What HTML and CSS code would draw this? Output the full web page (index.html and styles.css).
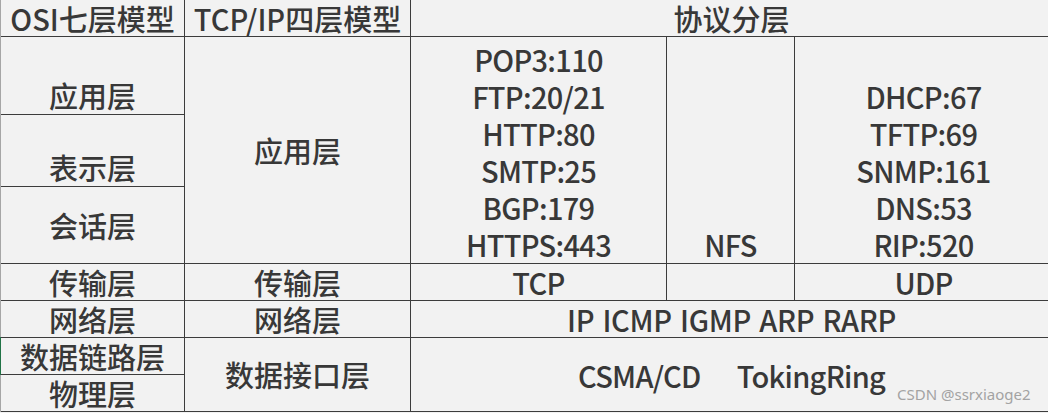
FILE: index.html
```html
<!DOCTYPE html>
<html lang="zh-CN">
<head>
<meta charset="utf-8">
<title>OSI / TCP-IP 分层</title>
<link rel="stylesheet" href="styles.css">
</head>
<body>
<div class="sheet">
  <div class="cell r1 c1 mid">OSI七层模型</div>
  <div class="cell r1 c2 mid">TCP/IP四层模型</div>
  <div class="cell r1 c35 mid">协议分层</div>

  <div class="cell r2 c1 bottom">应用层</div>
  <div class="cell r3 c1 bottom">表示层</div>
  <div class="cell r4 c1 mid">会话层</div>

  <div class="cell r24 c2 mid">应用层</div>
  <div class="cell r24 c3 bottom list latin">
    <span>POP3:110</span>
    <span>FTP:20/21</span>
    <span>HTTP:80</span>
    <span>SMTP:25</span>
    <span>BGP:179</span>
    <span>HTTPS:443</span>
  </div>
  <div class="cell r24 c4 bottom latin">NFS</div>
  <div class="cell r24 c5 bottom list latin">
    <span>DHCP:67</span>
    <span>TFTP:69</span>
    <span>SNMP:161</span>
    <span>DNS:53</span>
    <span>RIP:520</span>
  </div>

  <div class="cell r5 c1 mid">传输层</div>
  <div class="cell r5 c2 mid">传输层</div>
  <div class="cell r5 c3 mid latin">TCP</div>
  <div class="cell r5 c4 mid"></div>
  <div class="cell r5 c5 mid latin">UDP</div>

  <div class="cell r6 c1 mid">网络层</div>
  <div class="cell r6 c2 mid">网络层</div>
  <div class="cell r6 c35 mid proto-line">IP ICMP IGMP ARP RARP</div>

  <div class="cell r7 c1 mid selected">数据链路层</div>
  <div class="cell r8 c1 mid">物理层</div>
  <div class="cell r78 c2 mid">数据接口层</div>
  <div class="cell r78 c35 mid pair latin"><span>CSMA/CD</span><span>TokingRing</span></div>
</div>
<div class="watermark">CSDN @ssrxiaoge2</div>
</body>
</html>
```

FILE: styles.css
```css
html, body {
  margin: 0;
  padding: 0;
  background: #f2f2f2;
  overflow: hidden;
}

body {
  width: 1048px;
  height: 413px;
  position: relative;
  font-family: "Noto Sans CJK SC", "Noto Sans", sans-serif;
  color: #383838;
}

.sheet {
  display: grid;
  width: 1053px;
  border-left: 1px solid #a6a6a6;
  grid-template-columns: 184px 226px 256px 128px 258px;
  grid-template-rows: 37px 78px 72px 77px 37px 37px 37px 37px;
  font-size: 29px;
  font-weight: 500;
  line-height: 37px;
}

.cell {
  box-sizing: border-box;
  border-right: 1px solid #3c3c3c;
  border-bottom: 1px solid #3c3c3c;
  display: flex;
  flex-direction: column;
  align-items: center;
  white-space: nowrap;
  position: relative;
}

.mid { justify-content: center; }
.bottom { justify-content: flex-end; }

.latin { letter-spacing: -0.7px; }
.proto-line { letter-spacing: -0.3px; word-spacing: 2px; }

.list span { display: block; height: 37px; }

.pair {
  flex-direction: row;
  gap: 36px;
  padding-top: 2px;
}

.r1 { grid-row: 1; }
.r2 { grid-row: 2; }
.r3 { grid-row: 3; }
.r4 { grid-row: 4; }
.r24 { grid-row: 2 / 5; }
.r5 { grid-row: 5; }
.r6 { grid-row: 6; }
.r7 { grid-row: 7; }
.r8 { grid-row: 8; }
.r78 { grid-row: 7 / 9; }

.c1 { grid-column: 1; }
.c2 { grid-column: 2; }
.c3 { grid-column: 3; }
.c4 { grid-column: 4; }
.c5 { grid-column: 5; }
.c35 { grid-column: 3 / 6; }

.selected::before {
  content: "";
  position: absolute;
  left: -1px;
  top: -1px;
  bottom: -1px;
  width: 1px;
  background: #217346;
}

.watermark {
  position: absolute;
  left: 897px;
  top: 384px;
  font-family: "Noto Sans", "Liberation Sans", sans-serif;
  font-size: 15px;
  line-height: 20px;
  color: #a3a3a3;
  white-space: nowrap;
}
```
